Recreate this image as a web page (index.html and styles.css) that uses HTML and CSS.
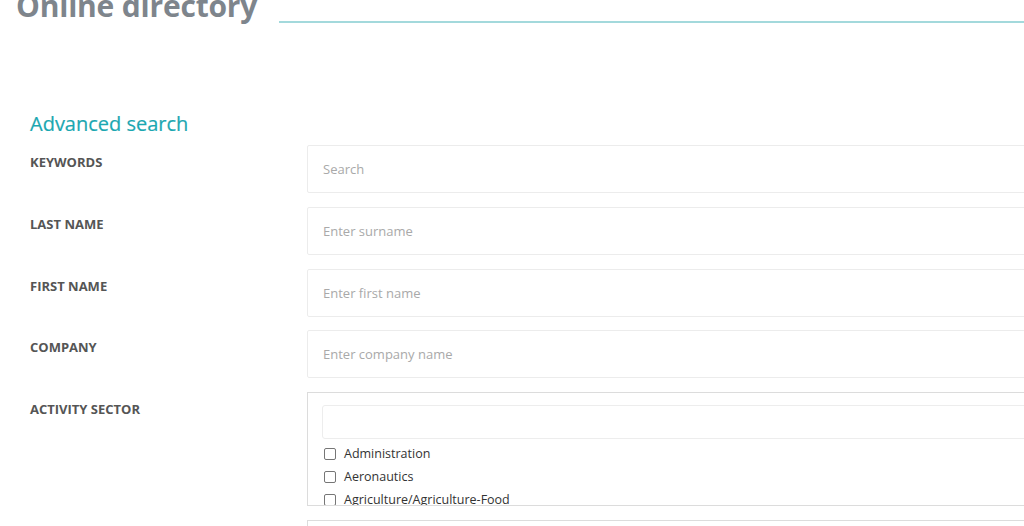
FILE: index.html
```html
<!DOCTYPE html>
<html lang="en">
<head>
<meta charset="utf-8">
<title>Online directory</title>
<link rel="stylesheet" href="styles.css">
</head>
<body>
<header class="page-head">
  <h1 class="page-title">Online directory</h1>
  <span class="title-rule"></span>
</header>

<main class="search">
  <h2 class="search-title">Advanced search</h2>
  <form class="search-form">
    <div class="field">
      <label class="field-label" for="kw">Keywords</label>
      <input class="field-input" id="kw" type="text" placeholder="Search">
    </div>
    <div class="field">
      <label class="field-label" for="ln">Last name</label>
      <input class="field-input" id="ln" type="text" placeholder="Enter surname">
    </div>
    <div class="field">
      <label class="field-label" for="fn">First name</label>
      <input class="field-input" id="fn" type="text" placeholder="Enter first name">
    </div>
    <div class="field">
      <label class="field-label" for="co">Company</label>
      <input class="field-input" id="co" type="text" placeholder="Enter company name">
    </div>
    <div class="field">
      <span class="field-label">Activity sector</span>
      <div class="picker">
        <input class="picker-filter" type="text" aria-label="Filter sectors">
        <ul class="picker-list">
          <li><label class="option"><input type="checkbox" class="check"><span>Administration</span></label></li>
          <li><label class="option"><input type="checkbox" class="check"><span>Aeronautics</span></label></li>
          <li><label class="option"><input type="checkbox" class="check"><span>Agriculture/Agriculture-Food</span></label></li>
          <li><label class="option"><input type="checkbox" class="check"><span>Architecture</span></label></li>
        </ul>
      </div>
    </div>
    <div class="field">
      <span class="field-label"></span>
      <div class="picker picker-next"></div>
    </div>
  </form>
</main>
</body>
</html>
```

FILE: styles.css
```css
html {
  overflow: hidden;
}

body {
  margin: 0;
  background: #fff;
  font-family: "Open Sans", "Noto Sans", sans-serif;
  color: #333;
}

.page-head {
  display: flex;
  align-items: flex-end;
  gap: 22px;
  margin-top: -13px;
  padding-left: 16px;
  width: 1200px;
}

.page-title {
  margin: 0;
  font-size: 30px;
  line-height: 38px;
  font-weight: 700;
  color: #7e858c;
  letter-spacing: -0.2px;
}

.title-rule {
  flex: 1;
  height: 2px;
  margin-bottom: 2px;
  background: #a3d9dc;
}

.search {
  padding: 0 0 0 30px;
  margin-top: 86px;
  width: 1200px;
}

.search-title {
  margin: 0 0 8px;
  font-size: 20px;
  line-height: 26px;
  font-weight: 500;
  color: #1ba7b1;
  -webkit-text-stroke: 0.2px #1ba7b1;
}

.search-form {
  display: flex;
  flex-direction: column;
  gap: 13.75px;
}

.field {
  display: grid;
  grid-template-columns: 277px 1fr;
  align-items: start;
}

.field-label {
  padding-top: 8px;
  font-size: 13px;
  line-height: 18px;
  font-weight: 700;
  text-transform: uppercase;
  color: #555;
}

.field-input {
  box-sizing: border-box;
  height: 48px;
  width: 100%;
  margin: 0;
  padding: 0 15px;
  border: 1px solid #ececec;
  border-radius: 2px;
  font-family: inherit;
  font-size: 13px;
  color: #333;
  outline: none;
}

.field-input::placeholder {
  color: #a9a9a9;
}

.picker {
  box-sizing: border-box;
  height: 114px;
  padding: 12px 14px 0;
  border: 1px solid #dcdcdc;
  overflow: hidden;
}

.picker-next {
  height: 40px;
}

.picker-filter {
  box-sizing: border-box;
  display: block;
  width: 100%;
  height: 34px;
  margin: 0 0 3px;
  border: 1px solid #ededed;
  border-radius: 3px;
  outline: none;
}

.picker-list {
  list-style: none;
  margin: 0;
  padding: 0;
}

.option {
  display: flex;
  align-items: center;
  gap: 8px;
  height: 23px;
  font-size: 12.5px;
  color: #333;
}

.check {
  appearance: none;
  width: 12px;
  height: 12px;
  margin: 0 0 0 2px;
  border: 1px solid #767676;
  border-radius: 2px;
  background: #fff;
}
```
